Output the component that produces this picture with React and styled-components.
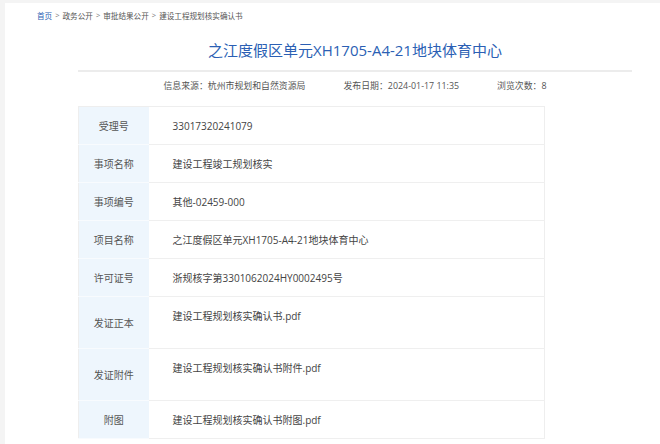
import React from "react";
import styled, { createGlobalStyle } from "styled-components";

const Global = createGlobalStyle`
  html, body { margin: 0; padding: 0; background: #f4f4f4; }
  body { font-family: "Open Sans", "Noto Sans CJK SC", sans-serif; }
  * { box-sizing: border-box; }
`;

const Page = styled.div`
  padding: 3px 0 0 5px;
  min-height: 444px;
`;

const Sheet = styled.div`
  background: #fff;
  min-height: 441px;
  padding-bottom: 20px;
`;

const Crumbs = styled.nav`
  height: 24px;
  display: flex;
  align-items: center;
  padding-left: 32px;
  font-size: 7.6px;
  color: #555;
  gap: 3px;
`;

const CrumbLink = styled.a`
  color: #2b5fb4;
  text-decoration: none;
`;

const Sep = styled.span`
  color: #777;
`;

const Column = styled.div`
  margin-left: 73px;
  width: 554px;
`;

const Title = styled.h1`
  margin: 13px 0 0;
  padding-bottom: 10px;
  border-bottom: 2px solid #ececec;
  font-size: 15px;
  line-height: 20px;
  font-weight: 400;
  color: #2b5fb4;
  text-align: center;
`;

const Meta = styled.div`
  margin-top: 7px;
  display: flex;
  justify-content: center;
  gap: 38px;
  font-size: 8.9px;
  line-height: 14px;
  color: #555;
`;

const Table = styled.table`
  margin-top: 13px;
  width: 467px;
  border-collapse: collapse;
  border: 1px solid #eeeeee;
  font-size: 10px;
`;

const Row = styled.tr`
  height: ${(p) => (p.$tall ? 52 : 38)}px;
  border-bottom: 1px solid #efefef;
`;

const Label = styled.th`
  width: 70px;
  background: #eef6fd;
  color: #555;
  font-weight: 400;
  text-align: center;
  vertical-align: middle;
  border-bottom: 1px solid #f8fbfe;
  padding: 0;
`;

const Value = styled.td`
  color: #444;
  padding: ${(p) => (p.$tall ? "12px 0 0 24px" : "0 0 0 24px")};
  vertical-align: ${(p) => (p.$tall ? "top" : "middle")};
  line-height: 14px;
`;

const rows = [
  ["受理号", "33017320241079"],
  ["事项名称", "建设工程竣工规划核实"],
  ["事项编号", "其他-02459-000"],
  ["项目名称", "之江度假区单元XH1705-A4-21地块体育中心"],
  ["许可证号", "浙规核字第3301062024HY0002495号"],
  ["发证正本", "建设工程规划核实确认书.pdf", true],
  ["发证附件", "建设工程规划核实确认书附件.pdf", true],
  ["附图", "建设工程规划核实确认书附图.pdf"],
];

export default function App() {
  return (
    <>
      <Global />
      <Page>
        <Sheet>
          <Crumbs>
            <CrumbLink href="#">首页</CrumbLink>
            <Sep>&gt;</Sep>
            <span>政务公开</span>
            <Sep>&gt;</Sep>
            <span>审批结果公开</span>
            <Sep>&gt;</Sep>
            <span>建设工程规划核实确认书</span>
          </Crumbs>
          <Column>
            <Title>之江度假区单元XH1705-A4-21地块体育中心</Title>
            <Meta>
              <span>信息来源：杭州市规划和自然资源局</span>
              <span>发布日期：2024-01-17 11:35</span>
              <span>浏览次数：8</span>
            </Meta>
            <Table>
              <tbody>
                {rows.map(([k, v, tall]) => (
                  <Row key={k} $tall={tall}>
                    <Label>{k}</Label>
                    <Value $tall={tall}>{v}</Value>
                  </Row>
                ))}
              </tbody>
            </Table>
          </Column>
        </Sheet>
      </Page>
    </>
  );
}
